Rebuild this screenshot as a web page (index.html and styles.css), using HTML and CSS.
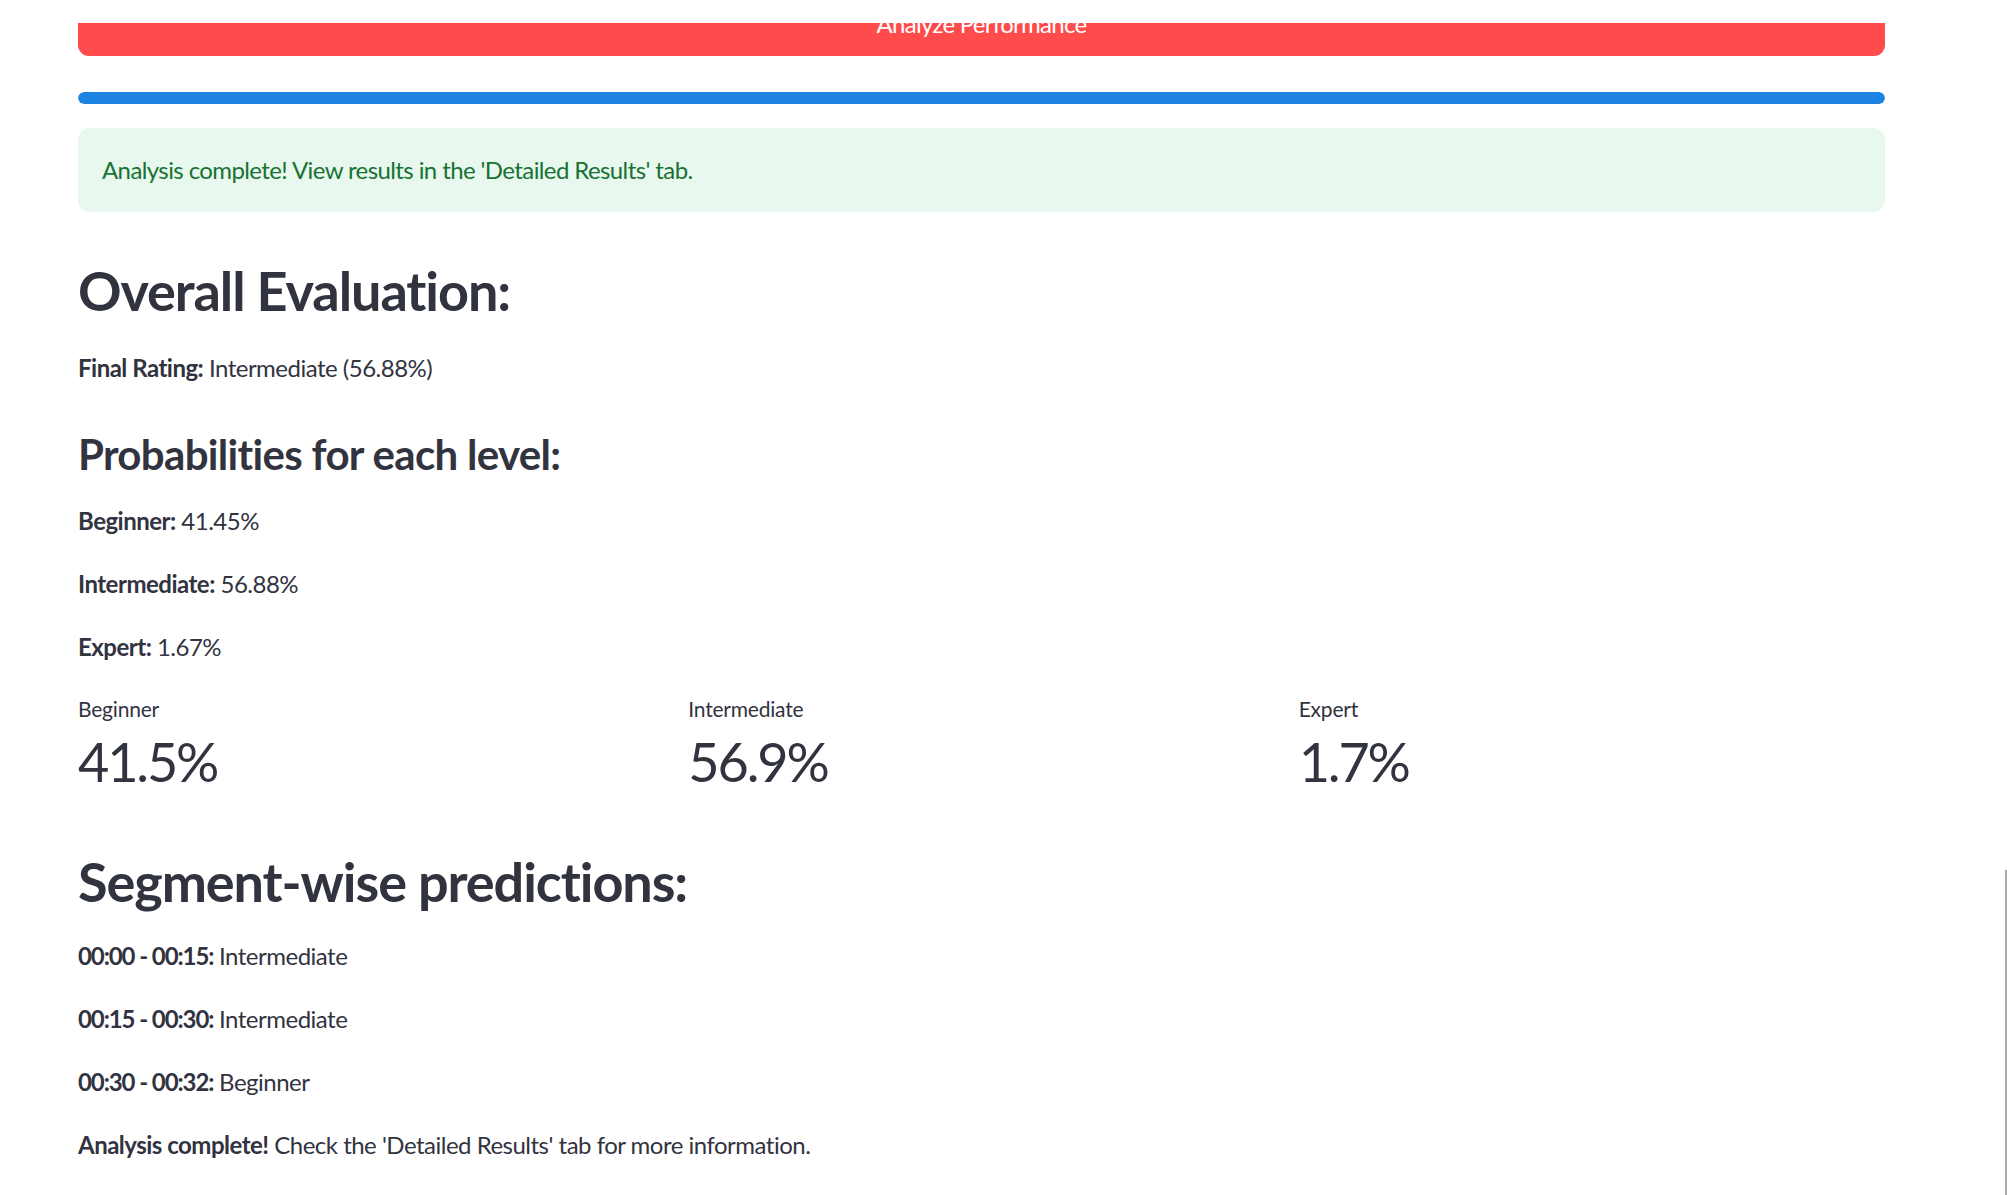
FILE: index.html
```html
<!DOCTYPE html>
<html lang="en">
<head>
<meta charset="utf-8">
<title>Performance Analysis</title>
<link rel="stylesheet" href="styles.css">
</head>
<body>
<div class="topbar"></div>
<main class="main">
  <button class="btn-primary" type="button">Analyze Performance</button>
  <div class="progress"><div class="progress-fill" style="width:100%"></div></div>
  <div class="alert-success"><p>Analysis complete! View results in the 'Detailed Results' tab.</p></div>

  <h2 class="h2 h2-overall">Overall Evaluation:</h2>
  <p class="md md-rating"><strong>Final Rating:</strong> Intermediate (56.88%)</p>

  <h3 class="h3">Probabilities for each level:</h3>
  <p class="md md-first"><strong>Beginner:</strong> 41.45%</p>
  <p class="md"><strong>Intermediate:</strong> 56.88%</p>
  <p class="md"><strong>Expert:</strong> 1.67%</p>

  <div class="metrics">
    <div class="metric">
      <div class="metric-label">Beginner</div>
      <div class="metric-value">41.5%</div>
    </div>
    <div class="metric">
      <div class="metric-label">Intermediate</div>
      <div class="metric-value">56.9%</div>
    </div>
    <div class="metric">
      <div class="metric-label">Expert</div>
      <div class="metric-value">1.7%</div>
    </div>
  </div>

  <h2 class="h2 h2-segments">Segment-wise predictions:</h2>
  <p class="md md-seg-first"><strong class="tc">00:00 - 00:15:</strong> Intermediate</p>
  <p class="md"><strong class="tc">00:15 - 00:30:</strong> Intermediate</p>
  <p class="md"><strong class="tc">00:30 - 00:32:</strong> Beginner</p>
  <p class="md"><strong>Analysis complete!</strong> Check the 'Detailed Results' tab for more information.</p>
</main>
<div class="scroll-edge"></div>
</body>
</html>
```
FILE: styles.css
```css
* { box-sizing: border-box; }
html, body { margin: 0; padding: 0; background: #ffffff; }
body {
  font-family: Lato, "Noto Sans", "Liberation Sans", sans-serif;
  color: #31333f;
  overflow: hidden;
  height: 1195px;
}
.topbar {
  position: fixed;
  top: 0; left: 0; right: 0;
  height: 23px;
  background: #ffffff;
  z-index: 5;
}
.main {
  display: flex;
  flex-direction: column;
  padding: 0 122px 0 78px;
}
.btn-primary {
  display: block;
  width: 100%;
  margin-top: -4px;
  height: 60px;
  padding: 0 0 4px 0;
  line-height: 56px;
  border: none;
  border-radius: 11px;
  background: #ff4b4b;
  color: #ffffff;
  font-family: inherit;
  font-size: 24px;
  letter-spacing: -0.03em;
}
.progress {
  margin-top: 36px;
  height: 12px;
  border-radius: 6px;
  background: #f0f2f6;
  overflow: hidden;
}
.progress-fill { height: 100%; background: #1c83e1; border-radius: 6px; }
.alert-success {
  margin-top: 24px;
  height: 84px;
  padding: 24px 24px;
  border-radius: 12px;
  background: #e8f8ee;
  color: #177233;
}
.alert-success p { margin: 0; font-size: 24px; line-height: 35px; letter-spacing: -0.025em; }
.h2 {
  margin: 0;
  font-size: 54px;
  line-height: 65px;
  font-weight: 700;
  letter-spacing: -0.02em;
}
.h2-overall { margin-top: 46px; }
.h2-segments { margin-top: 55px; }
.h3 {
  margin: 42px 0 0 0;
  font-size: 42px;
  line-height: 50px;
  font-weight: 700;
  letter-spacing: -0.016em;
}
.md {
  margin: 25px 0 0 0;
  font-size: 24px;
  line-height: 38px;
  letter-spacing: -0.021em;
}
.md strong { font-weight: 700; }
.md strong.tc { letter-spacing: -0.045em; }
.md-rating { margin-top: 26px; }
.md-first { margin-top: 23px; }
.md-seg-first { margin-top: 23px; }
.metrics {
  margin-top: 28px;
  display: grid;
  grid-template-columns: repeat(3, 1fr);
  column-gap: 24px;
}
.metric-label { font-size: 21px; line-height: 30px; letter-spacing: -0.01em; }
.metric-value { margin-top: 5px; font-size: 54px; line-height: 65px; font-weight: 400; letter-spacing: -0.04em; }
.scroll-edge {
  position: fixed;
  right: 0;
  top: 870px;
  bottom: 0;
  width: 2px;
  background: #a8a8a8;
}
```
